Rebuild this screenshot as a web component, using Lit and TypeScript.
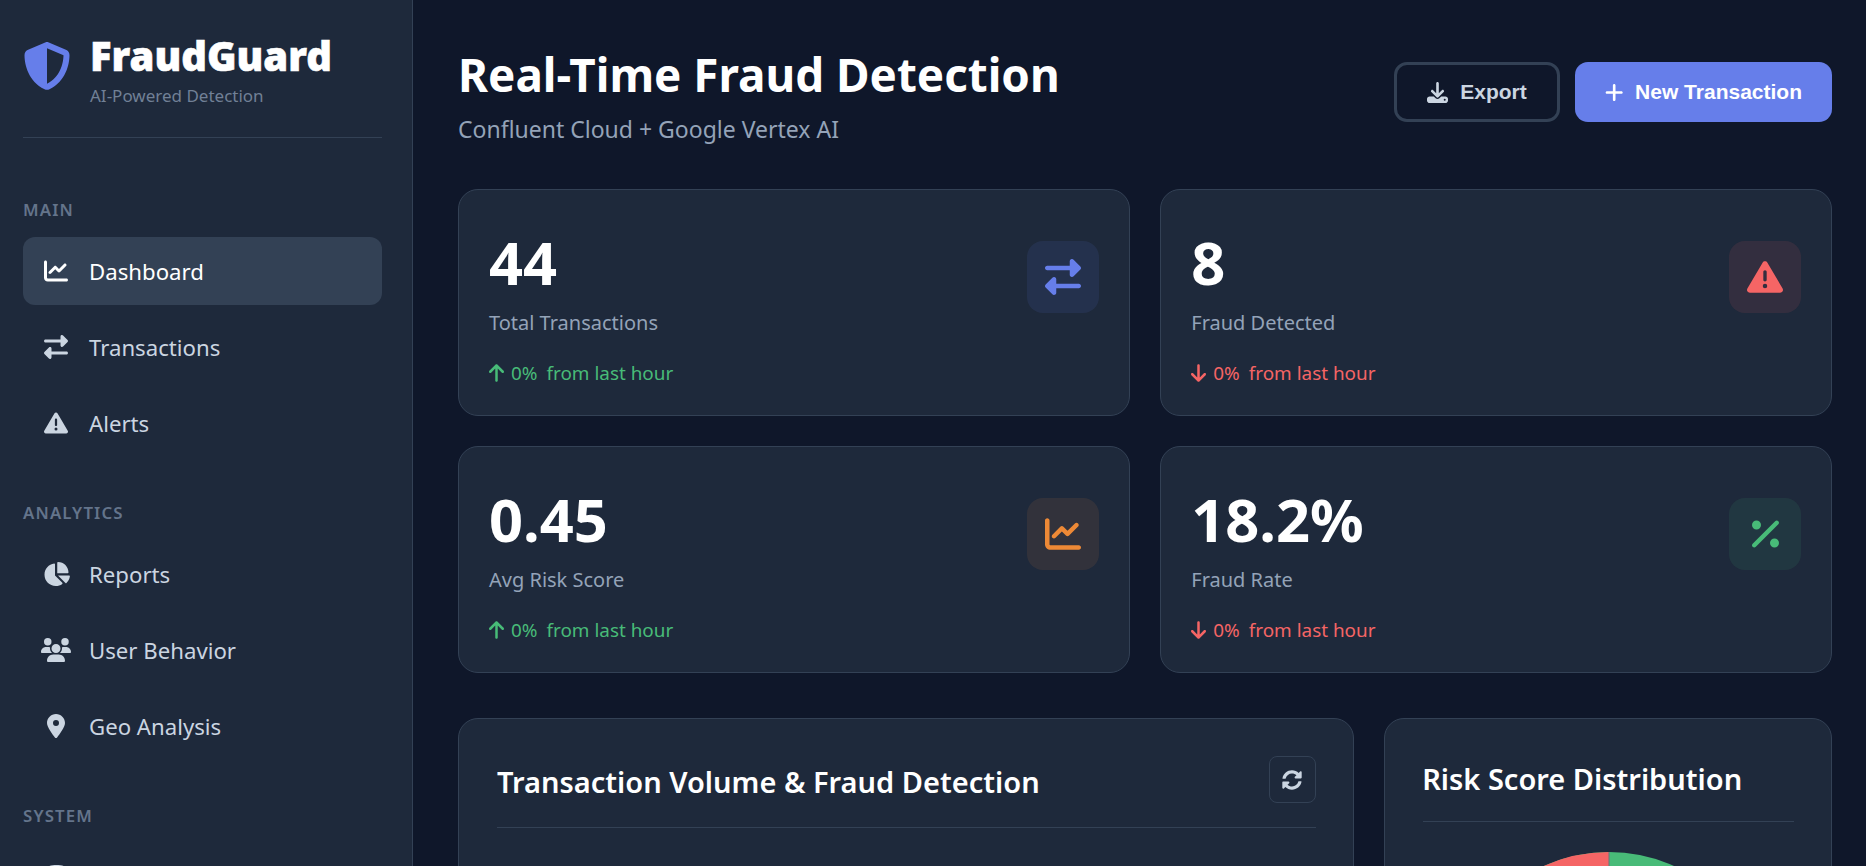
import { LitElement, html, css, svg } from "lit";
import { customElement } from "lit/decorators.js";

const P: Record<string, [number, string]> = {
  shield: [512, "M256 0c4.600 0 9.200 1 13.400 2.900L457.700 82.800c22 9.300 38.400 31 38.300 57.200c-.5 99.200-41.300 280.700-213.600 363.200c-16.700 8-36.100 8-52.800 0C57.300 420.700 16.500 239.200 16 140c-.1-26.200 16.300-47.900 38.300-57.200L242.700 2.900C246.800 1 251.400 0 256 0zm0 66.800V444.800C394 378 431.100 230.100 432 141.400L256 66.800l0 0z"],
  line: [512, "M64 64c0-17.700-14.300-32-32-32S0 46.300 0 64V400c0 44.200 35.800 80 80 80H480c17.700 0 32-14.300 32-32s-14.300-32-32-32H80c-8.800 0-16-7.200-16-16V64zm406.600 86.600c12.500-12.500 12.500-32.800 0-45.300s-32.800-12.500-45.300 0L320 210.700l-57.400-57.400c-12.500-12.500-32.800-12.500-45.300 0l-112 112c-12.500 12.500-12.500 32.800 0 45.300s32.800 12.500 45.300 0L240 221.300l57.400 57.400c12.500 12.500 32.800 12.500 45.300 0l128-128z"],
  swap: [512, "M32 96l320 0V32c0-12.900 7.800-24.600 19.800-29.600s25.700-2.200 34.900 6.900l96 96c6 6 9.400 14.100 9.400 22.600s-3.400 16.600-9.400 22.600l-96 96c-9.200 9.200-22.900 11.900-34.900 6.900s-19.800-16.600-19.800-29.600V160L32 160c-17.700 0-32-14.300-32-32s14.300-32 32-32zM480 352c17.700 0 32 14.300 32 32s-14.300 32-32 32H160v64c0 12.900-7.800 24.600-19.800 29.600s-25.700 2.200-34.900-6.900l-96-96c-6-6-9.400-14.100-9.400-22.600s3.400-16.600 9.400-22.600l96-96c9.200-9.200 22.900-11.900 34.900-6.900s19.800 16.600 19.800 29.600l0 64H480z"],
  warn: [512, "M256 32c14.200 0 27.300 7.500 34.500 19.800l216 368c7.300 12.400 7.300 27.700 .2 40.100S486.300 480 472 480H40c-14.300 0-27.600-7.700-34.700-20.100s-7-27.800 .2-40.100l216-368C228.700 39.500 241.800 32 256 32zm0 128c-13.300 0-24 10.700-24 24V296c0 13.300 10.700 24 24 24s24-10.700 24-24V184c0-13.300-10.700-24-24-24zm32 224a32 32 0 1 0 -64 0 32 32 0 1 0 64 0z"],
  pie: [576, "M304 240V16.600c0-9 7-16.600 16-16.600C443.700 0 544 100.300 544 224c0 9-7.600 16-16.600 16H304zM32 272C32 150.700 122.100 50.300 239 34.300c9.200-1.300 17 6.100 17 15.400V288L412.500 444.500c6.700 6.700 6.200 17.700-1.500 23.100C371.800 495.600 323.800 512 272 512C139.500 512 32 404.600 32 272zm526.400 16c9.300 0 16.600 7.800 15.400 17c-7.700 55.900-34.600 105.600-73.900 142.300c-6 5.600-15.400 5.200-21.200-.7L320 288H558.400z"],
  users: [640, "M144 0a80 80 0 1 1 0 160A80 80 0 1 1 144 0zM512 0a80 80 0 1 1 0 160A80 80 0 1 1 512 0zM0 298.700C0 239.800 47.800 192 106.700 192h42.700c15.900 0 31 3.500 44.600 9.700c-1.300 7.200-1.900 14.700-1.900 22.300c0 38.200 16.800 72.500 43.300 96c-.2 0-.4 0-.7 0H21.300C9.600 320 0 310.400 0 298.700zM405.300 320c-.2 0-.4 0-.7 0c26.600-23.500 43.300-57.800 43.300-96c0-7.600-.7-15-1.900-22.300c13.600-6.300 28.700-9.700 44.600-9.700h42.700C592.200 192 640 239.800 640 298.700c0 11.800-9.600 21.300-21.300 21.300H405.300zM224 224a96 96 0 1 1 192 0 96 96 0 1 1 -192 0zM128 485.300C128 411.700 187.700 352 261.300 352H378.700C452.300 352 512 411.700 512 485.300c0 14.700-11.900 26.700-26.700 26.700H154.700c-14.700 0-26.700-11.900-26.700-26.700z"],
  pin: [384, "M215.700 499.200C267 435 384 279.400 384 192C384 86 298 0 192 0S0 86 0 192c0 87.400 117 243 168.300 307.200c12.300 15.300 35.100 15.300 47.400 0zM192 128a64 64 0 1 1 0 128 64 64 0 1 1 0-128z"],
  download: [512, "M288 32c0-17.700-14.300-32-32-32s-32 14.300-32 32V274.700l-73.400-73.400c-12.500-12.500-32.800-12.500-45.300 0s-12.500 32.800 0 45.300l128 128c12.500 12.500 32.800 12.500 45.300 0l128-128c12.500-12.500 12.500-32.800 0-45.300s-32.800-12.500-45.300 0L288 274.700V32zM64 352c-35.300 0-64 28.700-64 64v32c0 35.300 28.700 64 64 64H448c35.300 0 64-28.700 64-64V416c0-35.300-28.700-64-64-64H346.500l-45.300 45.300c-25 25-65.500 25-90.500 0L165.500 352H64zm368 56a24 24 0 1 1 0 48 24 24 0 1 1 0-48z"],
  plus: [448, "M256 80c0-17.700-14.300-32-32-32s-32 14.300-32 32V224H48c-17.700 0-32 14.300-32 32s14.300 32 32 32H192V432c0 17.700 14.300 32 32 32s32-14.300 32-32V288H400c17.700 0 32-14.300 32-32s-14.300-32-32-32H256V80z"],
  percent: [384, "M374.600 118.600c12.500-12.500 12.500-32.800 0-45.300s-32.800-12.500-45.300 0l-320 320c-12.500 12.500-12.500 32.800 0 45.300s32.800 12.500 45.300 0l320-320zM128 128A64 64 0 1 0 0 128a64 64 0 1 0 128 0zM384 384a64 64 0 1 0 -128 0 64 64 0 1 0 128 0z"],
  up: [384, "M214.600 41.400c-12.500-12.500-32.800-12.500-45.300 0l-160 160c-12.500 12.500-12.500 32.800 0 45.300s32.800 12.500 45.300 0L160 141.200V448c0 17.700 14.300 32 32 32s32-14.300 32-32V141.200L329.400 246.600c12.500 12.500 32.800 12.500 45.300 0s12.500-32.800 0-45.300l-160-160z"],
  down: [384, "M169.400 470.600c12.500 12.500 32.800 12.500 45.300 0l160-160c12.500-12.500 12.500-32.800 0-45.300s-32.800-12.500-45.300 0L224 370.800 224 64c0-17.700-14.300-32-32-32s-32 14.300-32 32l0 306.700L54.600 265.400c-12.500-12.500-32.800-12.500-45.300 0s-12.500 32.800 0 45.300l160 160z"],
  sync: [512, "M370.720 133.280C339.458 104.008 298.888 87.962 255.848 88c-77.458.068-144.328 53.178-162.791 126.850-1.344 5.363-6.122 9.150-11.651 9.150H24.103c-7.498 0-13.194-6.807-11.807-14.176C33.933 94.924 134.813 8 256 8c66.448 0 126.791 26.136 171.315 68.685L463.030 40.970C478.149 25.851 504 36.559 504 57.941V192c0 13.255-10.745 24-24 24H345.941c-21.382 0-32.090-25.851-16.971-40.971l41.750-41.749zM32 296h134.059c21.382 0 32.090 25.851 16.971 40.971l-41.750 41.750c31.262 29.273 71.835 45.319 114.876 45.280 77.418-.070 144.315-53.144 162.787-126.849 1.344-5.363 6.122-9.150 11.651-9.150h57.304c7.498 0 13.194 6.807 11.807 14.176C478.067 417.076 377.187 504 256 504c-66.448 0-126.791-26.136-171.315-68.685L48.970 471.030C33.851 486.149 8 475.441 8 454.059V320c0-13.255 10.745-24 24-24z"],
  database: [448, "M448 80v48c0 44.200-100.300 80-224 80S0 172.200 0 128V80C0 35.800 100.300 0 224 0S448 35.800 448 80zM393.200 214.700c20.800-7.400 39.900-16.900 54.800-28.600V288c0 44.200-100.300 80-224 80S0 332.200 0 288V186.100c14.900 11.800 34 21.200 54.800 28.600C99.700 230.700 159.500 240 224 240s124.300-9.300 169.200-25.300zM0 346.100c14.900 11.800 34 21.200 54.800 28.600C99.700 390.700 159.500 400 224 400s124.300-9.300 169.200-25.300c20.800-7.400 39.900-16.900 54.800-28.600V432c0 44.200-100.300 80-224 80S0 476.200 0 432V346.100z"],
};

function icon(name: string, size: number) {
  const [w, d] = P[name];
  return html`<svg class="fa" width=${(w / 512) * size} height=${size} viewBox="0 0 ${w} 512" fill="currentColor">${svg`<path d=${d}></path>`}</svg>`;
}

const NAV = [
  { label: "MAIN", items: [["line", "Dashboard", true], ["swap", "Transactions"], ["warn", "Alerts"]] },
  { label: "ANALYTICS", items: [["pie", "Reports"], ["users", "User Behavior"], ["pin", "Geo Analysis"]] },
  { label: "SYSTEM", items: [["database", ""]] },
];

const STATS = [
  { value: "44", label: "Total Transactions", icon: "swap", tone: "blue", dir: "up" },
  { value: "8", label: "Fraud Detected", icon: "warn", tone: "red", dir: "down" },
  { value: "0.45", label: "Avg Risk Score", icon: "line", tone: "orange", dir: "up" },
  { value: "18.2%", label: "Fraud Rate", icon: "percent", tone: "green", dir: "down" },
];

@customElement("app-root")
export class AppRoot extends LitElement {
  static styles = css`
    :host {
      display: block;
      height: 866px;
      overflow: hidden;
      background: #0f172a;
      font-family: "Noto Sans", "Open Sans", sans-serif;
      color: #fff;
    }
    .fa { display: block; flex: none; }
    .layout { display: flex; height: 866px; overflow: hidden; }
    .sidebar {
      width: 413px; flex: none; box-sizing: border-box;
      background: #1e293b; border-right: 1px solid #334155;
      padding: 30px 30px 0 23px; height: 866px; overflow: hidden;
    }
    .brand {
      display: flex; gap: 19px; align-items: flex-start;
      padding: 0 0 24px 0; border-bottom: 1px solid #334155; height: 83px; box-sizing: content-box;
    }
    .logo { color: #667eea; margin: 12px 0 0 0; }
    .brand-name { font-size: 40px; font-weight: 900; line-height: 46px; color: #fff; margin-top: 3px; -webkit-text-stroke: 0.6px #fff; }
    .brand-sub { font-size: 17px; line-height: 22px; color: #718096; margin-top: 6px; }
    .section { margin-bottom: 44px; }
    .section.first { margin-top: 60px; }
    .sec-label {
      font-size: 16.8px; font-weight: 600; letter-spacing: 1.15px; color: #64748b;
      line-height: 24px; margin-bottom: 15px;
    }
    .nav { display: flex; flex-direction: column; gap: 8px; }
    .item {
      display: flex; align-items: center; gap: 21px; height: 68px; padding: 0 21px;
      border-radius: 12px; font-size: 22.2px; color: #cbd5e1; box-sizing: border-box;
    }
    .item.active { background: #334155; color: #fff; }
    .ico { width: 24px; display: flex; justify-content: center; flex: none; }
    .main { flex: 1; min-width: 0; padding: 43px 34px 0 45px; box-sizing: border-box; }
    .top { display: flex; justify-content: space-between; align-items: flex-start; margin-bottom: 45px; }
    h1 { margin: 0; font-size: 45.8px; line-height: 62px; font-weight: 700; }
    .subtitle { font-size: 23px; line-height: 30px; color: #94a3b8; margin-top: 9px; }
    .actions { display: flex; gap: 15px; margin-top: 19px; }
    button {
      display: flex; align-items: center; gap: 12px; height: 60px; box-sizing: border-box;
      border-radius: 13px; font-family: "Liberation Sans", Arial, sans-serif; font-weight: 700; font-size: 21px;
      padding: 0 30px; border: 0;
    }
    .ghost { background: transparent; border: 3px solid #334155; color: #cbd5e1; }
    .primary { background: #667eea; color: #fff; }
    .stats { display: grid; grid-template-columns: 1fr 1fr; gap: 30px 30.5px; margin-bottom: 45px; }
    .card { background: #1e293b; border: 1px solid #334155; border-radius: 20px; box-sizing: border-box; }
    .stat { height: 227px; padding: 30px; display: flex; justify-content: space-between; align-items: flex-start; }
    .val { font-size: 59.5px; line-height: 78px; font-weight: 700; color: #fff; margin-top: 3px; }
    .lab { font-size: 20px; line-height: 28px; color: #94a3b8; margin-top: 8px; }
    .chg { display: flex; align-items: center; gap: 7px; font-size: 18.9px; line-height: 26px; margin-top: 22.5px; }
    .chg .from { margin-left: 2px; }
    .chg.up { color: #48bb78; }
    .chg.down { color: #f56565; }
    .si { width: 72px; height: 72px; border-radius: 16px; display: flex; align-items: center; justify-content: center; margin-top: 21px; }
    .si.blue { background: rgba(102,126,234,.1); color: #667eea; }
    .si.red { background: rgba(245,101,101,.1); color: #f56565; }
    .si.orange { background: rgba(237,137,54,.1); color: #ed8936; }
    .si.green { background: rgba(72,187,120,.1); color: #48bb78; }
    .charts { display: grid; grid-template-columns: 2fr 1fr; gap: 30.5px; }
    .panel { height: 400px; overflow: hidden; padding: 37px 37px 0 38px; }
    .ph { display: flex; justify-content: space-between; align-items: center; border-bottom: 1px solid #334155; }
    .a .ph { padding-bottom: 24px; }
    .b .ph { padding-bottom: 22px; }
    .ph h2 { margin: 0; font-size: 29px; font-weight: 600; color: #fff; line-height: 40px; }
    .a .ph h2 { margin-top: 4px; }
    .b .ph h2 { margin-top: 3px; margin-left: -1px; }
    .refresh { width: 47px; height: 47px; border: 1px solid #334155; border-radius: 8px; display: flex; align-items: center; justify-content: center; color: #cbd5e1; box-sizing: border-box; }
    .pie { display: block; margin: 30px auto 0; }
  `;

  render() {
    return html`<div class="layout">
      <aside class="sidebar">
        <div class="brand">
          <span class="logo">${icon("shield", 48)}</span>
          <div>
            <div class="brand-name">FraudGuard</div>
            <div class="brand-sub">AI-Powered Detection</div>
          </div>
        </div>
        ${NAV.map((s, i) => html`<div class="section ${i === 0 ? "first" : ""}">
          <div class="sec-label">${s.label}</div>
          <div class="nav">
            ${s.items.map((it) => html`<div class="item ${it[2] ? "active" : ""}">
              <span class="ico">${icon(it[0] as string, 24)}</span><span>${it[1]}</span>
            </div>`)}
          </div>
        </div>`)}
      </aside>
      <main class="main">
        <div class="top">
          <div>
            <h1>Real-Time Fraud Detection</h1>
            <div class="subtitle">Confluent Cloud + Google Vertex AI</div>
          </div>
          <div class="actions">
            <button class="ghost">${icon("download", 21)}Export</button>
            <button class="primary">${icon("plus", 21)}New Transaction</button>
          </div>
        </div>
        <div class="stats">
          ${STATS.map((s) => html`<div class="card stat">
            <div>
              <div class="val">${s.value}</div>
              <div class="lab">${s.label}</div>
              <div class="chg ${s.dir}">${icon(s.dir, 20)}<span>0%</span><span class="from">from last hour</span></div>
            </div>
            <div class="si ${s.tone}">${icon(s.icon, 36)}</div>
          </div>`)}
        </div>
        <div class="charts">
          <div class="card panel a">
            <div class="ph"><h2>Transaction Volume &amp; Fraud Detection</h2><div class="refresh">${icon("sync", 20)}</div></div>
          </div>
          <div class="card panel b">
            <div class="ph"><h2>Risk Score Distribution</h2></div>
            <svg class="pie" width="316" height="316" viewBox="-158 -158 316 316">
              <circle r="158" fill="#48bb78"></circle>
              <path d="M0 0 L0 -158 A158 158 0 0 0 -125 -97 Z" fill="#f56565"></path>
              <path d="M0 0 L0 -158" stroke="#6b7280" stroke-width="1"></path>
            </svg>
          </div>
        </div>
      </main>
    </div>`;
  }
}
